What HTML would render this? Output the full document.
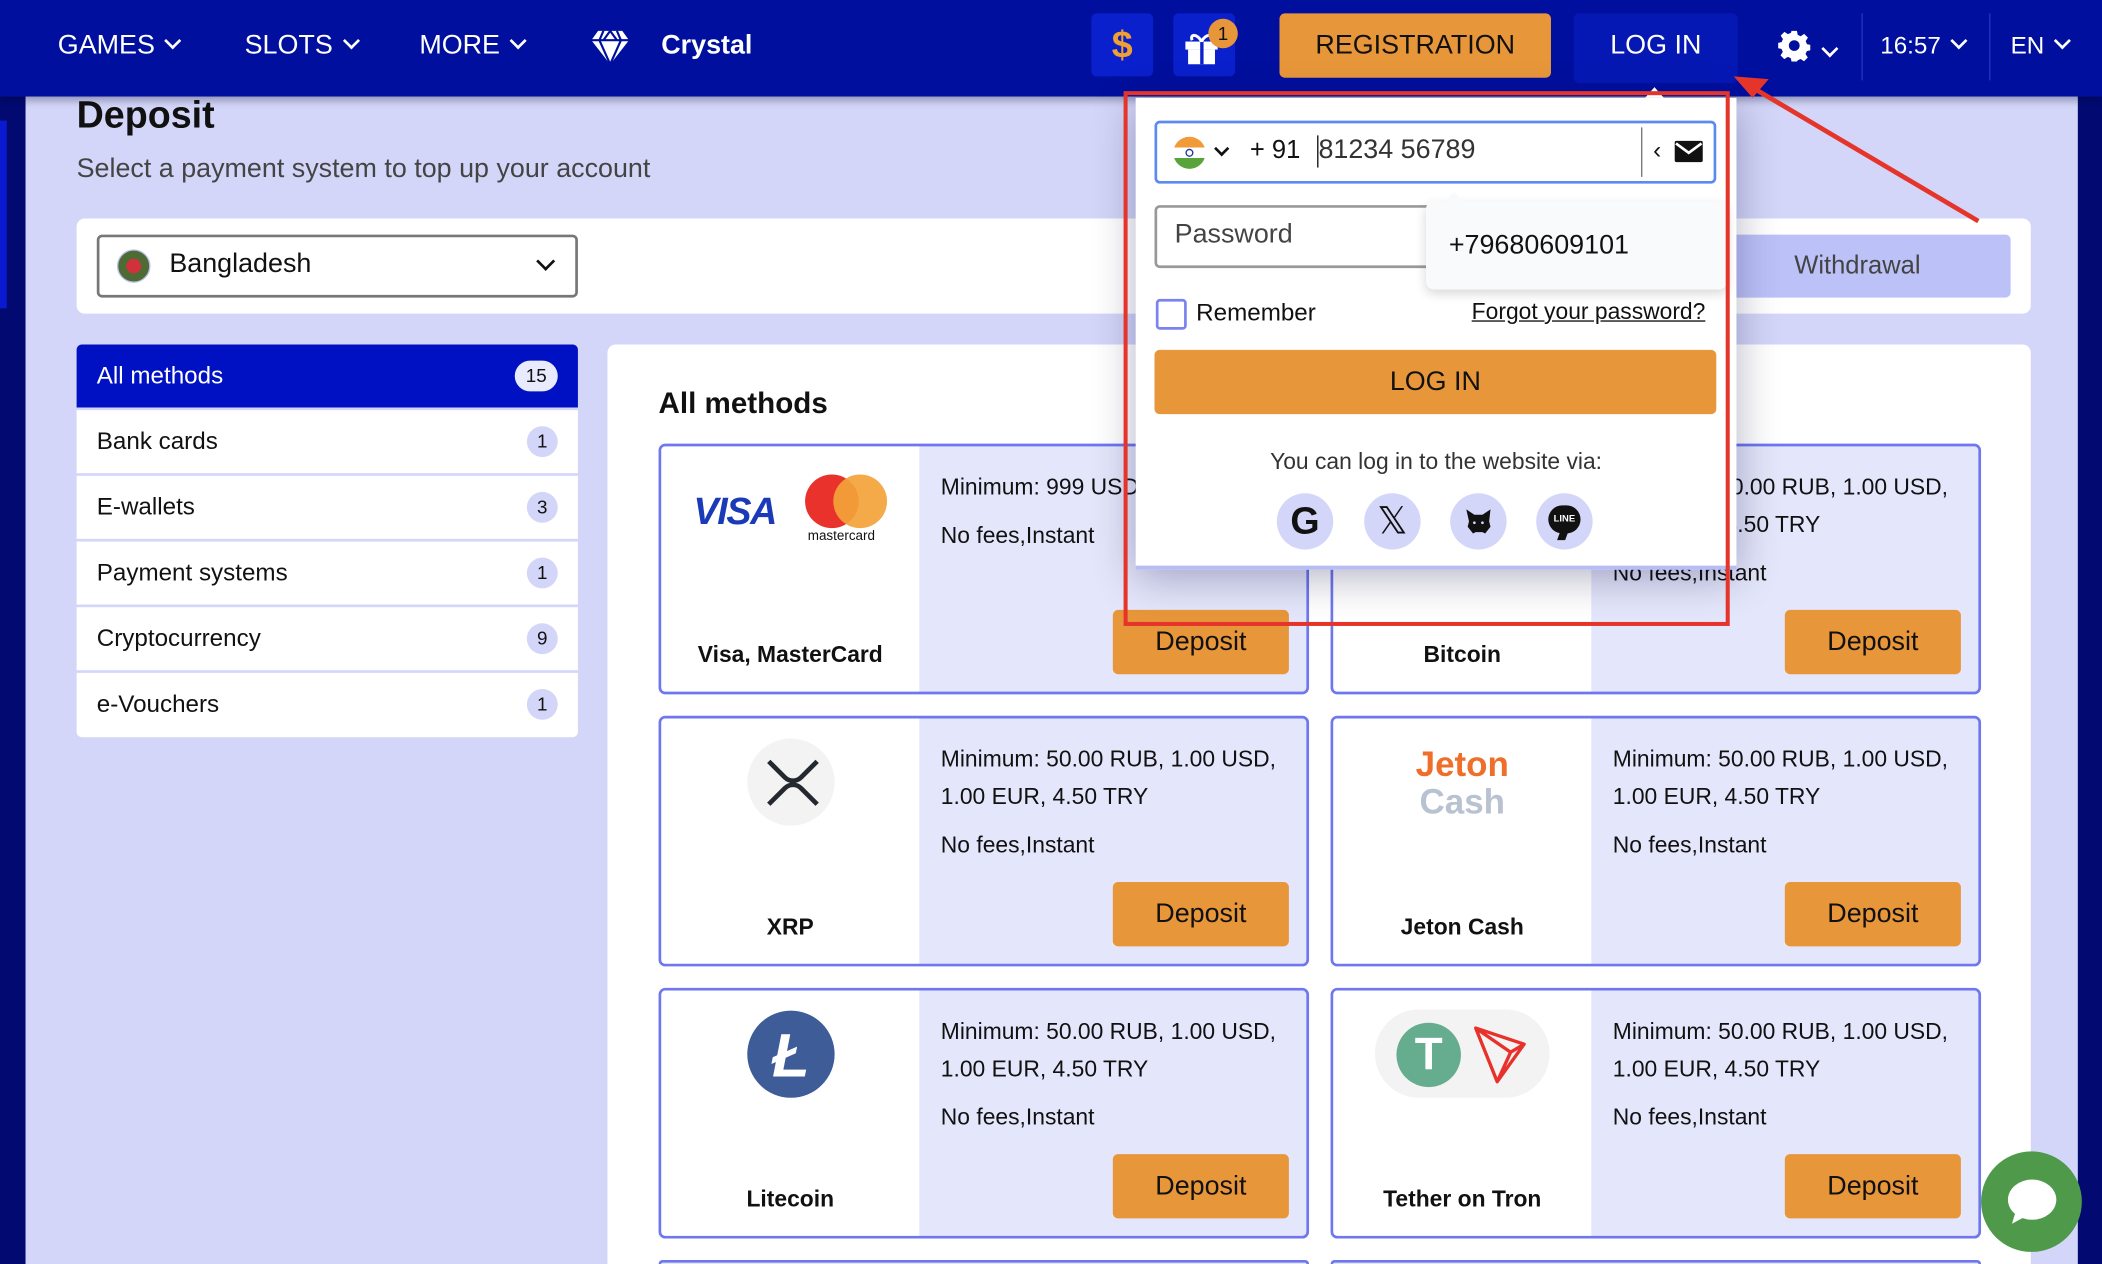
<!DOCTYPE html>
<html><head><meta charset="utf-8"><style>
*{margin:0;padding:0;box-sizing:border-box}
html,body{width:2102px;height:1264px;overflow:hidden;background:#d3d6f8}
#s{position:absolute;left:0;top:0;width:1564px;height:943px;transform:scale(1.344,1.3404);transform-origin:0 0;font-family:"Liberation Sans",Arial,sans-serif;color:#111;background:#d3d6f8;overflow:hidden}
.a{position:absolute}
.hdr{left:0;top:0;width:1564px;height:72px;background:#000f9e;box-shadow:0 3px 6px rgba(0,0,40,.35);z-index:5}
.ht{color:#fff;font-size:20px;top:23px}
.chev{display:inline-block;width:9px;height:9px;border-right:2.5px solid #fff;border-bottom:2.5px solid #fff;transform:rotate(45deg);margin-left:9px;position:relative;top:-5px}
.card{position:absolute;width:484px;height:187px;border:2px solid #6e77ee;border-radius:5px;background:#e4e6fb;overflow:hidden}
.card .l{position:absolute;left:0;top:0;width:192px;height:100%;background:#fff}
.card .nm{position:absolute;left:0;width:192px;text-align:center;top:146px;font-weight:bold;font-size:17px}
.card .t{position:absolute;left:208px;font-size:17px;line-height:28px;top:17px}
.card .dep{position:absolute;left:336px;top:122px;width:131px;height:48px;background:#e8963a;border-radius:4px;font-size:20px;text-align:center;line-height:48px}
.si{position:absolute;left:57px;width:373px;height:47px;background:#fff;font-size:18px;line-height:47px;padding-left:15px}
.bd{position:absolute;right:15px;top:12px;width:23px;height:23px;border-radius:12px;background:#d3d6f8;font-size:14px;line-height:23px;text-align:center}
.soc{position:absolute;top:295px;width:42px;height:42px;border-radius:50%;background:#d3d6f8}
</style></head><body><div id="s">
<div class="a" style="left:0;top:72px;width:19px;height:871px;background:#020a72"></div>
<div class="a" style="left:0;top:90px;width:5px;height:140px;background:#0a1ad0"></div>
<div class="a" style="left:1546px;top:72px;width:18px;height:871px;background:#020a72"></div>

<div class="a hdr">
 <div class="a ht" style="left:43px">GAMES<span class="chev"></span></div>
 <div class="a ht" style="left:182px">SLOTS<span class="chev"></span></div>
 <div class="a ht" style="left:312px">MORE<span class="chev"></span></div>
 <svg class="a" style="left:440px;top:22px" width="28" height="26" viewBox="0 0 28 26"><path d="M5 1h18l5 7-14 18L0 8z" fill="#fff"/><path d="M0 8h28M9 1l-3 7 8 18 8-18-3-7M14 1l-5 7h10z" stroke="#000f9e" stroke-width="1.6" fill="none"/></svg>
 <div class="a ht" style="left:492px;font-weight:bold">Crystal</div>
 <div class="a" style="left:812px;top:10px;width:46px;height:47px;background:#0a20cc;border-radius:4px;color:#f0a030;font-size:28px;font-weight:bold;text-align:center;line-height:47px">$</div>
 <div class="a" style="left:873px;top:10px;width:46px;height:47px;background:#0a20cc;border-radius:4px"></div>
 <svg class="a" style="left:881px;top:22px" width="26" height="26" viewBox="0 0 26 26"><rect x="1" y="9" width="24" height="6" fill="#fff"/><rect x="3" y="15" width="20" height="11" fill="#fff"/><rect x="12" y="9" width="2.5" height="17" fill="#0a20cc"/><path d="M13 9c-3-6-9-6-7-1M13 9c3-6 9-6 7-1" stroke="#fff" stroke-width="2.2" fill="none"/></svg>
 <div class="a" style="left:899px;top:14px;width:22px;height:22px;border-radius:11px;background:#e8963a;color:#111;font-size:14px;text-align:center;line-height:22px">1</div>
 <div class="a" style="left:952px;top:10px;width:202px;height:48px;background:#e8963a;border-radius:4px;color:#111;font-size:20px;text-align:center;line-height:48px">REGISTRATION</div>
 <div class="a" style="left:1171px;top:10px;width:122px;height:52px;background:#0618b4;border-radius:4px;color:#fff;font-size:20px;text-align:center;line-height:48px">LOG IN</div>
 <svg class="a" style="left:1323px;top:22px" width="24" height="24" viewBox="0 0 24 24"><path fill="#fff" d="M10 1h4l.6 3 2.2 1 2.6-1.7 2.8 2.8L20.5 8.7l1 2.3 2.5.5v4l-2.6.6-1 2.2 1.7 2.6-2.8 2.8-2.6-1.7-2.2 1L14 24h-4l-.6-2.6-2.2-1-2.6 1.7-2.8-2.8 1.7-2.6-1-2.2L0 14v-4l2.6-.6 1-2.2L1.9 4.6l2.8-2.8 2.6 1.7 2.2-1z"/><circle cx="12" cy="12" r="4" fill="#000f9e"/></svg>
 <span class="a chev" style="left:1348px;top:28px"></span>
 <div class="a" style="left:1385px;top:10px;width:1px;height:50px;background:#2636b8"></div>
 <div class="a ht" style="left:1399px;font-size:18px;top:24px">16:57<span class="chev"></span></div>
 <div class="a" style="left:1480px;top:10px;width:1px;height:50px;background:#2636b8"></div>
 <div class="a ht" style="left:1496px;font-size:18px;top:24px">EN<span class="chev"></span></div>
</div>

<div class="a" style="left:57px;top:70px;font-size:28px;font-weight:bold">Deposit</div>
<div class="a" style="left:57px;top:115px;font-size:20px;color:#444">Select a payment system to top up your account</div>
<div class="a" style="left:57px;top:163px;width:1454px;height:71px;background:#fff;border-radius:6px"></div>
<div class="a" style="left:72px;top:175px;width:358px;height:47px;border:2px solid #777;border-radius:4px;background:#fff"></div>
<div class="a" style="left:87px;top:186px;width:25px;height:25px;border-radius:50%;background:#4e6b34;border:1px solid #b9c0f0"><div class="a" style="left:6px;top:6px;width:11px;height:11px;border-radius:50%;background:#d0313a"></div></div>
<div class="a" style="left:126px;top:186px;font-size:20px">Bangladesh</div>
<span class="a" style="left:401px;top:190px;width:10px;height:10px;border-right:2.5px solid #111;border-bottom:2.5px solid #111;transform:rotate(45deg)"></span>
<div class="a" style="left:1268px;top:175px;width:228px;height:47px;background:#bcc2f7;border-radius:4px;color:#444;font-size:19px;text-align:center;line-height:47px">Withdrawal</div>

<div class="si" style="top:257px;background:#0011c4;color:#fff;border-radius:4px 4px 0 0">All methods<div class="bd" style="background:#e8eafd;color:#111;width:32px">15</div></div>
<div class="si" style="top:306px">Bank cards<div class="bd">1</div></div>
<div class="si" style="top:355px">E-wallets<div class="bd">3</div></div>
<div class="si" style="top:404px">Payment systems<div class="bd">1</div></div>
<div class="si" style="top:453px">Cryptocurrency<div class="bd">9</div></div>
<div class="si" style="top:502px;height:48px;border-radius:0 0 4px 4px">e-Vouchers<div class="bd">1</div></div>

<div class="a" style="left:452px;top:257px;width:1059px;height:686px;background:#fff;border-radius:6px 6px 0 0"></div>
<div class="a" style="left:490px;top:288px;font-size:22px;font-weight:bold">All methods</div>

<div class="card" style="left:490px;top:331px"><div class="l"></div>
 <div class="a" style="left:24px;top:33px;font-size:28px;font-weight:bold;font-style:italic;color:#1a3ab8;letter-spacing:-1px">VISA</div>
 <div class="a" style="left:107px;top:21px;width:40px;height:40px;border-radius:50%;background:#e8322b"></div>
 <div class="a" style="left:128px;top:21px;width:40px;height:40px;border-radius:50%;background:#f3a33a;opacity:.92"></div>
 <div class="a" style="left:109px;top:62px;font-size:10px">mastercard</div>
 <div class="nm">Visa, MasterCard</div>
 <div class="t">Minimum: 999 USD<br><span style="position:relative;top:8px">No fees,Instant</span></div>
 <div class="dep">Deposit</div></div>
<div class="card" style="left:990px;top:331px"><div class="l"></div><div class="nm">Bitcoin</div>
 <div class="t">Minimum: 50.00 RUB, 1.00 USD,<br>1.00 EUR, 4.50 TRY<br><span style="position:relative;top:8px">No fees,Instant</span></div><div class="dep">Deposit</div></div>

<div class="card" style="left:490px;top:534px"><div class="l"></div>
 <div class="a" style="left:64px;top:15px;width:65px;height:65px;border-radius:50%;background:#f3f3f3"></div>
 <svg class="a" style="left:78px;top:30px" width="40" height="36" viewBox="0 0 40 36"><path d="M2 2l12 12c3.5 3.3 8.5 3.3 12 0L38 2M2 34l12-12c3.5-3.3 8.5-3.3 12 0l12 12" stroke="#23292f" stroke-width="3.5" fill="none"/></svg>
 <div class="nm">XRP</div>
 <div class="t">Minimum: 50.00 RUB, 1.00 USD,<br>1.00 EUR, 4.50 TRY<br><span style="position:relative;top:8px">No fees,Instant</span></div><div class="dep">Deposit</div></div>
<div class="card" style="left:990px;top:534px"><div class="l"></div>
 <div class="a" style="left:0;width:192px;text-align:center;top:20px;font-size:26px;font-weight:bold;line-height:28px;color:#ef6f2a">Jeton<br><span style="color:#b9c2d0">Cash</span></div>
 <div class="nm">Jeton Cash</div>
 <div class="t">Minimum: 50.00 RUB, 1.00 USD,<br>1.00 EUR, 4.50 TRY<br><span style="position:relative;top:8px">No fees,Instant</span></div><div class="dep">Deposit</div></div>

<div class="card" style="left:490px;top:737px"><div class="l"></div>
 <div class="a" style="left:64px;top:15px;width:65px;height:65px;border-radius:50%;background:#3d5c98"></div>
 <div class="a" style="left:64px;top:20px;width:65px;text-align:center;font-size:46px;font-weight:bold;font-style:italic;color:#fff;line-height:56px">Ł</div>
 <div class="nm">Litecoin</div>
 <div class="t">Minimum: 50.00 RUB, 1.00 USD,<br>1.00 EUR, 4.50 TRY<br><span style="position:relative;top:8px">No fees,Instant</span></div><div class="dep">Deposit</div></div>
<div class="card" style="left:990px;top:737px"><div class="l"></div>
 <div class="a" style="left:31px;top:14px;width:130px;height:66px;border-radius:33px;background:#f3f3f3"></div>
 <div class="a" style="left:47px;top:24px;width:48px;height:48px;border-radius:50%;background:#66ad90;color:#fff;font-size:34px;font-weight:bold;text-align:center;line-height:48px">T</div>
 <svg class="a" style="left:104px;top:26px" width="40" height="44" viewBox="0 0 40 44"><path d="M2 2l36 12-20 28zM2 2l16 40M2 2l26 18 10-6M18 42l10-22" stroke="#e8312b" stroke-width="2.5" fill="none" stroke-linejoin="round"/></svg>
 <div class="nm">Tether on Tron</div>
 <div class="t">Minimum: 50.00 RUB, 1.00 USD,<br>1.00 EUR, 4.50 TRY<br><span style="position:relative;top:8px">No fees,Instant</span></div><div class="dep">Deposit</div></div>

<div class="card" style="left:490px;top:940px;height:3px;border-bottom:none;border-radius:5px 5px 0 0"></div>
<div class="card" style="left:990px;top:940px;height:3px;border-bottom:none;border-radius:5px 5px 0 0"></div>

<!-- popup -->
<div class="a" style="left:845px;top:73px;width:447px;height:352px;background:#fff;box-shadow:0 6px 30px rgba(0,0,60,.3);border-bottom:3px solid #b6bdf5;z-index:6">
 <div class="a" style="left:379px;top:-8px;width:0;height:0;border-left:7px solid transparent;border-right:7px solid transparent;border-bottom:8px solid #fff"></div>
 <div class="a" style="left:14px;top:17px;width:418px;height:47px;border:2px solid #5b8bee;border-radius:4px"></div>
 <div class="a" style="left:28px;top:29px;width:24px;height:24px;border-radius:50%;background:linear-gradient(#f19a38 33%,#fff 33% 66%,#58a33a 66%)"><div class="a" style="left:9px;top:9px;width:6px;height:6px;border-radius:50%;border:1px solid #1a3a9a"></div></div>
 <span class="a" style="left:60px;top:34px;width:8px;height:8px;border-right:2px solid #111;border-bottom:2px solid #111;transform:rotate(45deg)"></span>
 <div class="a" style="left:85px;top:29px;font-size:19px">+ 91</div>
 <div class="a" style="left:135px;top:28px;width:1px;height:24px;background:#111"></div>
 <div class="a" style="left:136px;top:28px;font-size:20px;color:#333">81234 56789</div>
 <div class="a" style="left:376px;top:22px;width:1px;height:37px;background:#777"></div>
 <div class="a" style="left:385px;top:29px;font-size:18px">‹</div>
 <svg class="a" style="left:401px;top:32px" width="21" height="16" viewBox="0 0 21 16"><rect width="21" height="16" rx="1.5" fill="#111"/><path d="M1 2l9.5 7L20 2" stroke="#fff" stroke-width="2" fill="none"/></svg>
 <div class="a" style="left:14px;top:80px;width:418px;height:47px;border:2px solid #999;border-radius:4px"></div>
 <div class="a" style="left:29px;top:91px;font-size:20px;color:#444">Password</div>
 <div class="a" style="left:216px;top:77px;width:224px;height:66px;background:#f9fafc;border-radius:6px;box-shadow:0 3px 8px rgba(0,0,0,.15)"></div>
 <div class="a" style="left:229px;top:70px;width:0;height:0;border-left:8px solid transparent;border-right:8px solid transparent;border-bottom:9px solid #f9fafc"></div>
 <div class="a" style="left:233px;top:99px;font-size:20px">+79680609101</div>
 <div class="a" style="left:15px;top:150px;width:23px;height:23px;border:2px solid #7a83ee;border-radius:3px"></div>
 <div class="a" style="left:45px;top:150px;font-size:18px">Remember</div>
 <div class="a" style="left:250px;top:150px;font-size:17px;text-decoration:underline">Forgot your password?</div>
 <div class="a" style="left:14px;top:188px;width:418px;height:48px;background:#e8963a;border-radius:4px;font-size:20px;text-align:center;line-height:48px">LOG IN</div>
 <div class="a" style="left:0;width:447px;top:262px;text-align:center;font-size:17px;color:#333">You can log in to the website via:</div>
 <div class="soc" style="left:105px"><div style="text-align:center;font-size:28px;font-weight:bold;line-height:42px">G</div></div>
 <div class="soc" style="left:170px"><div style="text-align:center;font-size:28px;line-height:42px">𝕏</div></div>
 <div class="soc" style="left:234px"><svg style="margin:11px" width="20" height="20" viewBox="0 0 20 20"><path d="M1 1l6 4h6l6-4-1 9 1 4-4 5-2-1H8l-2 1-4-5 1-4z" fill="#111"/><circle cx="7" cy="11" r="1" fill="#d3d6f8"/><circle cx="13" cy="11" r="1" fill="#d3d6f8"/></svg></div>
 <div class="soc" style="left:298px"><div style="position:absolute;left:9px;top:9px;width:24px;height:21px;border-radius:12px;background:#111;color:#fff;font-size:7px;text-align:center;line-height:21px;font-weight:bold">LINE</div><div style="position:absolute;left:17px;top:27px;width:6px;height:8px;background:#111;transform:skewX(-20deg)"></div></div>
</div>

<div class="a" style="left:836px;top:68px;width:451px;height:399px;border:3.5px solid #e5352b;z-index:7"></div>
<svg class="a" style="left:0;top:0;z-index:8" width="1564" height="943"><line x1="1472" y1="165" x2="1300" y2="63" stroke="#e5352b" stroke-width="3.5"/><path d="M1290 57l26 2-12 14z" fill="#e5352b"/></svg>

<div class="a" style="left:1474px;top:859px;width:75px;height:75px;border-radius:50%;background:#4f9a4a;z-index:9"></div>
<svg class="a" style="left:1490px;top:877px;z-index:10" width="44" height="40" viewBox="0 0 44 40"><ellipse cx="22" cy="18" rx="18" ry="15" fill="#fff"/><path d="M10 26l-3 10 11-6z" fill="#fff"/></svg>
</div></body></html>
